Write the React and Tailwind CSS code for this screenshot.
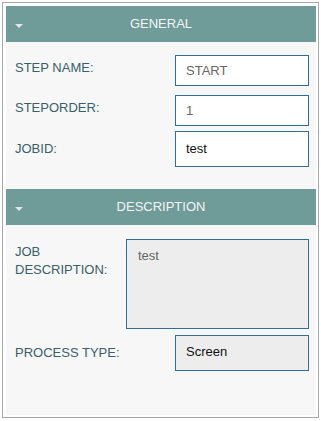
const font = { fontFamily: '"Liberation Sans", Arial, sans-serif' };

function SectionHeader({ title }) {
  return (
    <div className="relative h-[36px] bg-[#6f9b99] flex items-center justify-center text-[13px] text-[#f4f4f4]">
      <span className="absolute left-[9px] top-[18px] w-0 h-0 border-l-[4px] border-r-[4px] border-t-[4px] border-l-transparent border-r-transparent border-t-[#e4e4e4]" />
      {title}
    </div>
  );
}

function Field({ label, value, className = '', valueClass = 'text-[#666]', boxClass = 'bg-white', labelClass = '' }) {
  return (
    <div className={`flex items-center pl-[9px] pr-[7px] ${className}`}>
      <div className={`flex-1 text-[13px] text-[#3a5e6a] ${labelClass}`}>{label}</div>
      <div className={`w-[134px] h-full border border-[#2f6f9f] flex items-center pl-[10px] text-[13px] ${boxClass} ${valueClass}`}>
        {value}
      </div>
    </div>
  );
}

export default function App() {
  return (
    <div style={font} className="w-[321px] h-[421px] bg-white pt-[2px] pl-[2px]">
      <div className="w-[317px] h-[416px] border border-[#a9a9a9] pl-[3px] pr-[2px] pt-[3px] pb-[2px]">
        <div className="h-full bg-[#f7f7f7] flex flex-col">
          <SectionHeader title="GENERAL" />
          <Field label="STEP NAME:" value="START" className="mt-[13px] h-[31px]" labelClass="mb-[6px]" />
          <Field label="STEPORDER:" value="1" className="mt-[9px] h-[31px]" labelClass="mb-[5px]" />
          <Field label="JOBID:" value="test" className="mt-[5px] h-[36px]" valueClass="text-[#111]" />

          <div className="mt-[22px]">
            <SectionHeader title="DESCRIPTION" />
          </div>
          <div className="flex items-start pl-[9px] pr-[7px] mt-[14px]">
            <div className="flex-1 pt-[4px] text-[13px] leading-[18px] text-[#3a5e6a] pr-[8px]">
              JOB<br />DESCRIPTION:
            </div>
            <div className="w-[183px] h-[90px] border border-[#2f6f9f] bg-[#ededed] pl-[11px] pt-[6px] text-[13px] text-[#666]">
              test
            </div>
          </div>
          <Field label="PROCESS TYPE:" value="Screen" className="mt-[6px] h-[36px]" boxClass="bg-[#ededed]" valueClass="text-[#111] pb-[2px]" />
        </div>
      </div>
    </div>
  );
}
